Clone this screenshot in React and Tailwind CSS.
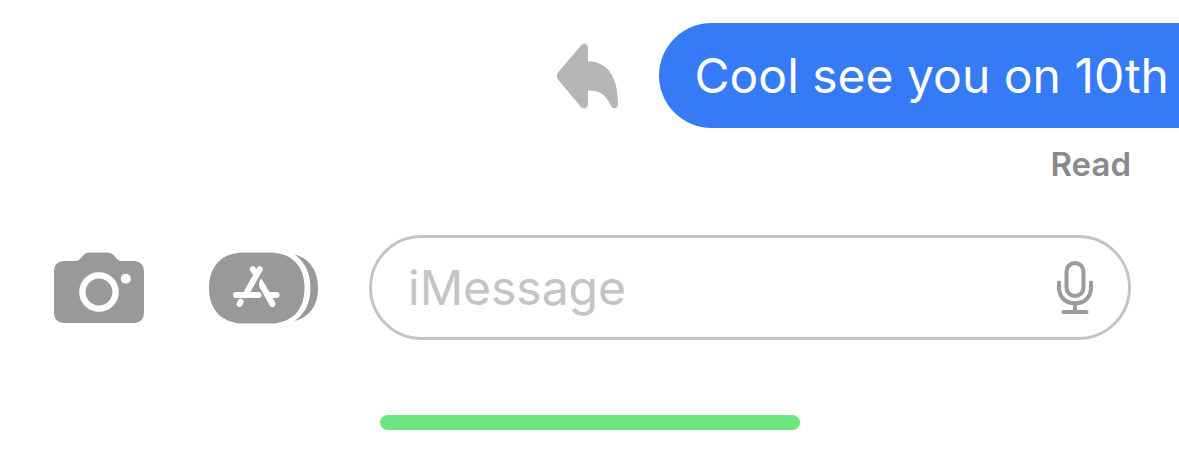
function ReplyArrow() {
  return (
    <svg width="62" height="66" viewBox="0 0 62 66" fill="#b6b6b8" aria-hidden="true">
      <path d="M24 2.500 C26.500 -.5 31 .6 31 4.500 V18.200 C50 18.500 61 33 61 61 C61 66.500 55.500 66.500 53.500 62 C48 50.500 42 47.500 31 47.500 V61 C31 65.500 26.500 66.500 23.500 63.500 L1.400 37 C-.7 34.500 -.7 31.500 1.400 29 Z" />
    </svg>
  );
}

function CameraIcon() {
  return (
    <svg width="90" height="71" viewBox="0 0 90 71" aria-hidden="true">
      <path
        fill="#999999"
        d="M10.500 9 H21.500 C24 9 25.200 8 27 6 L29 3.600 C31 1.200 33 .4 36 .4 H53 C56 .4 58 1.200 60 3.600 L62 6 C63.800 8 65 9 67.500 9 H79.500 C86 9 90 13 90 19.500 V60.500 C90 67 86 71 79.500 71 H10.500 C4 71 0 67 0 60.500 V19.500 C0 13 4 9 10.500 9 Z"
      />
      <circle cx="45" cy="40" r="16.600" fill="none" stroke="#fff" strokeWidth="6.400" />
      <circle cx="71.800" cy="26.800" r="5" fill="#fff" />
    </svg>
  );
}

function AppsIcon() {
  return (
    <svg width="110" height="72" viewBox="0 0 110 72" aria-hidden="true">
      <path fill="#999999" d="M35 .4 H60 C84 .4 95.500 15 95.500 36 C95.500 57 84 71.600 60 71.600 H35 C12 71.600 0 57 0 36 C0 15 12 .4 35 .4 Z" />
      <path fill="#999999" d="M85.500 2.500 C101 6.500 109 19 109 36 C109 53 101 65 85.500 69 C96.500 61.500 101.500 50 101.500 36 C101.500 22 96.500 10 85.500 2.500 Z" />
      <g fill="none" stroke="#fff" strokeWidth="6" strokeLinecap="round" strokeLinejoin="round">
        <path d="M43.800 17.200 L47.300 22.500" />
        <path d="M50.700 17.200 L38 40" />
        <path d="M27 43 H49.500" />
        <path d="M60 43 H67.500" />
        <path d="M54 35 L63.400 52" />
        <path d="M31.600 50 L30.600 52" />
      </g>
      <path d="M52.300 26.500 C49.500 29.500 49.500 34 51.500 37 L56.800 34 Z" fill="#fff" />
      <path d="M37.800 46.200 H44" stroke="#999999" strokeWidth="0.500" />
    </svg>
  );
}

function MicIcon() {
  return (
    <svg width="36" height="54" viewBox="0 0 36 54" fill="none" stroke="#9b9b9d" strokeWidth="4" strokeLinecap="round" aria-hidden="true">
      <rect x="9.500" y="2" width="17" height="33" rx="8.500" />
      <path d="M2 21.500 V26.500 C2 36 8.500 42.300 18 42.300 C27.500 42.300 34 36 34 26.500 V21.500 M18 42.300 V51 M6.500 51 H29.500" />
    </svg>
  );
}

export default function App() {
  return (
    <main className="overflow-hidden bg-white pt-[23px] pb-6 font-['Inter',sans-serif]">
      <section aria-label="Conversation">
        <div className="flex items-center justify-end gap-10">
          <button type="button" aria-label="Reply">
            <ReplyArrow />
          </button>
          <p className="flex h-[105px] items-center rounded-l-full bg-[#367af6] pr-2.5 pl-9 text-5xl whitespace-nowrap text-white">
            Cool see you on 10th
          </p>
        </div>
        <p className="mt-4 pr-12 text-right text-[33px] leading-10 font-semibold text-[#8a8a8e]">Read</p>
      </section>

      <form className="mt-[51px] flex items-center pr-12 pl-[54px]" onSubmit={(e) => e.preventDefault()}>
        <button type="button" aria-label="Camera" className="shrink-0">
          <CameraIcon />
        </button>
        <button type="button" aria-label="Apps" className="ml-[65px] shrink-0">
          <AppsIcon />
        </button>
        <div className="ml-[50px] flex h-[105px] min-w-0 flex-1 items-center rounded-full border-3 border-[#c4c4c6] pr-[35px] pl-9">
          <input
            type="text"
            aria-label="iMessage"
            placeholder="iMessage"
            className="min-w-0 flex-1 bg-transparent text-5xl text-black outline-none placeholder:text-[#c4c4c6]"
          />
          <button type="button" aria-label="Dictate" className="shrink-0">
            <MicIcon />
          </button>
        </div>
      </form>

      <div className="mx-auto mt-[75px] h-[15px] w-[420px] rounded-full bg-[#6de681]" />
    </main>
  );
}
